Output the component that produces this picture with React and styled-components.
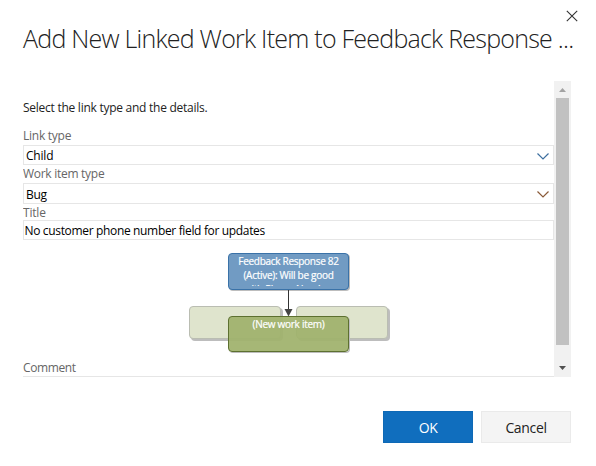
import React from "react";
import styled, { createGlobalStyle } from "styled-components";

const GlobalStyle = createGlobalStyle`
  * { box-sizing: border-box; }
  body { margin: 0; background: #fff; font-family: "Open Sans", "Noto Sans", sans-serif; }
`;

const Dialog = styled.div`
  position: relative;
  width: 596px;
  height: 466px;
  padding: 20px 25px 0 23px;
  background: #fff;
  color: #222;
  font-size: 12px;
  overflow: hidden;
`;

const CloseButton = styled.button`
  position: absolute;
  top: 10px;
  right: 18px;
  width: 12px;
  height: 12px;
  padding: 0;
  border: 0;
  background: none;
  svg { display: block; }
`;

const Heading = styled.h1`
  margin: 0;
  height: 61px;
  width: 560px;
  font-size: 25px;
  line-height: 37px;
  font-weight: 300;
  letter-spacing: -0.76px;
  white-space: nowrap;
`;

const ScrollPane = styled.div`
  display: flex;
  width: 548px;
  height: 296px;
  overflow: hidden;
`;

const Form = styled.div`
  width: 531px;
  height: 296px;
  padding-top: 18px;
  display: flex;
  flex-direction: column;
`;

const Line = styled.span`
  white-space: nowrap;
  letter-spacing: ${(p) => p.$track || 0}px;
`;

const Intro = styled.div`
  height: 28px;
  line-height: 18px;
`;

const Label = styled.label`
  display: block;
  height: ${(p) => p.$h}px;
  line-height: 17px;
  color: #666;
`;

const Field = styled.div`
  display: flex;
  justify-content: space-between;
  align-items: center;
  flex: none;
  height: ${(p) => p.$h}px;
  padding: ${(p) => p.$pad};
  border: 1px solid #e6e6e6;
  line-height: 18px;
  color: #000;
`;

const Diagram = styled.div`
  position: relative;
  flex: none;
  height: 119px;
`;

const Node = styled.div`
  position: absolute;
  left: ${(p) => p.$x}px;
  top: ${(p) => p.$y}px;
  width: ${(p) => p.$w}px;
  height: ${(p) => p.$h}px;
  padding: ${(p) => p.$pt || 0}px 4px 0;
  overflow: hidden;
  border: 1px solid ${(p) => p.$edge};
  border-radius: 4px;
  background: ${(p) => p.$fill};
  box-shadow: ${(p) => p.$depth || 1}px ${(p) => p.$depth || 1}px 0 #bdbdbd;
  color: #fff;
  font-size: 10px;
  line-height: 14px;
  text-align: center;
  white-space: nowrap;
`;

const NodeText = styled.div`
  height: ${(p) => p.$h}px;
  overflow: hidden;
  letter-spacing: ${(p) => p.$track || 0}px;
  -webkit-text-stroke: 0.2px #fff;
`;

const Arrow = styled.svg`
  position: absolute;
  left: 260px;
  top: 50px;
`;

const CommentBox = styled.div`
  flex: none;
  height: 1px;
  background: #e6e6e6;
`;

const Scrollbar = styled.div`
  display: flex;
  flex-direction: column;
  align-items: center;
  width: 17px;
  height: 296px;
  background: #f1f1f1;
`;

const ScrollArrow = styled.svg`
  display: block;
  flex: none;
`;

const Thumb = styled.div`
  width: 13px;
  height: 247px;
  margin-bottom: 15px;
  background: #c1c1c1;
`;

const Footer = styled.div`
  display: flex;
  gap: 8px;
  justify-content: flex-end;
  padding-top: 34px;
`;

const Button = styled.button`
  width: 90px;
  height: 32px;
  padding: 1px 0 0;
  border: 1px solid ${(p) => (p.$primary ? "#0e69b6" : "#eaeaea")};
  background: ${(p) => (p.$primary ? "#106ebe" : "#f4f4f4")};
  color: ${(p) => (p.$primary ? "#fff" : "#222")};
  font: 14px "Open Sans", "Noto Sans", sans-serif;
  letter-spacing: ${(p) => p.$track || 0}px;
`;

const Chevron = ({ color }) => (
  <svg width="12" height="7" viewBox="0 0 12 7">
    <path d="M0.5 0.5 L6 6 L11.5 0.5" fill="none" stroke={color} strokeWidth="1.2" />
  </svg>
);

export default function App() {
  return (
    <>
      <GlobalStyle />
      <Dialog>
        <CloseButton aria-label="Close">
          <svg width="12" height="12" viewBox="0 0 12 12">
            <path d="M0.8 0.8 L11.2 11.2 M11.2 0.8 L0.8 11.2" stroke="#333" strokeWidth="1.1" />
          </svg>
        </CloseButton>
        <Heading>Add New Linked Work Item to Feedback Response ...</Heading>
        <ScrollPane>
          <Form>
            <Intro><Line $track={-0.26}>Select the link type and the details.</Line></Intro>
            <Label $h={18}><Line $track={-0.25}>Link type</Line></Label>
            <Field $h={20} $pad="2px 4px 0 2px"><Line $track={-0.2}>Child</Line><Chevron color="#3d6f9f" /></Field>
            <Label $h={18}><Line $track={-0.28}>Work item type</Line></Label>
            <Field $h={21} $pad="2px 4px 0 2px"><Line $track={-0.3}>Bug</Line><Chevron color="#8a5a38" /></Field>
            <Label $h={16}><Line $track={-0.2}>Title</Line></Label>
            <Field $h={20} $pad="2px 0 0 0.5px"><Line $track={-0.34}>No customer phone number field for updates</Line></Field>
            <Diagram>
              <Node $x={166} $y={66} $w={92} $h={33} $depth={2} $fill="#dfe4cd" $edge="#babdb2" />
              <Node $x={273} $y={66} $w={92} $h={33} $depth={2} $fill="#dfe4cd" $edge="#babdb2" />
              <Node $x={205} $y={13} $w={121} $h={37} $fill="#719bc3" $edge="#3a72a8">
                <NodeText $h={32} $track={-0.28}>
                  Feedback Response 82<br />(Active): Will be good<br />with Phone Number
                </NodeText>
              </Node>
              <Arrow width="12" height="27" viewBox="0 0 12 27">
                <path d="M5.5 0 V20" stroke="#333" />
                <path d="M1.5 19 H9.5 L5.5 26.5 Z" fill="#444" />
              </Arrow>
              <Node $x={205} $y={76} $w={121} $h={36} $fill="rgba(159,177,108,.93)" $edge="#5d7030">
                <NodeText $h={20} $track={-0.28}>(New work item)</NodeText>
              </Node>
            </Diagram>
            <Label $h={17}><Line $track={-0.4}>Comment</Line></Label>
            <CommentBox />
          </Form>
          <Scrollbar>
            <ScrollArrow width="17" height="17"><path d="M5 11 L8.5 7 L12 11 Z" fill="#a3a3a3" /></ScrollArrow>
            <Thumb />
            <ScrollArrow width="17" height="17"><path d="M5 6 L8.5 10 L12 6 Z" fill="#505050" /></ScrollArrow>
          </Scrollbar>
        </ScrollPane>
        <Footer>
          <Button $primary $track={-0.6}>OK</Button>
          <Button $track={-0.35}>Cancel</Button>
        </Footer>
      </Dialog>
    </>
  );
}
